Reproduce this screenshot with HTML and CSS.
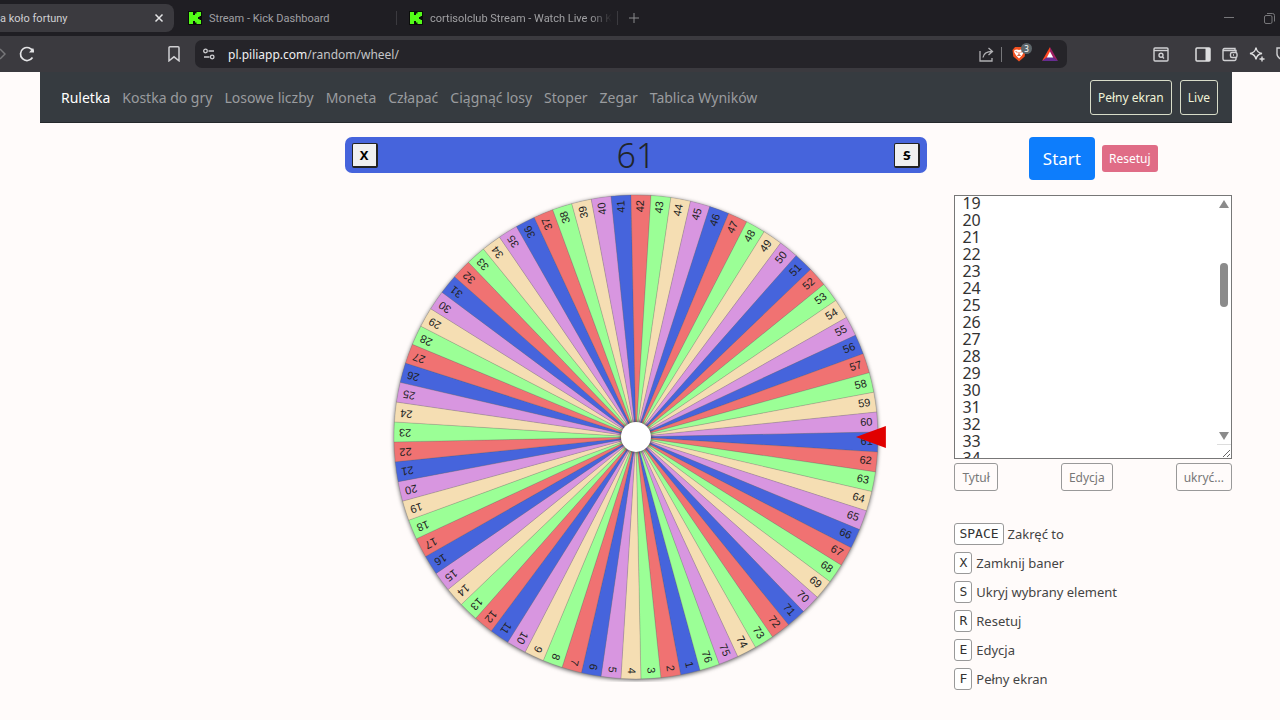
FILE: index.html
```
<!DOCTYPE html>
<html lang="pl">
  <head>
    <meta charset="utf-8" />
    <title>Ruletka - zakręć koło fortuny</title>
    <link rel="stylesheet" href="styles.css">
  </head>
  <body>
    <div class="browser">
      <div class="tabs">
        <div class="tab active">
          <span class="tab-title">a koło fortuny</span>
          <button class="icon-btn" aria-label="Zamknij kartę">
            <svg width="10" height="10" viewBox="0 0 10 10"><path d="M1.5 1.5l7 7M8.5 1.5l-7 7" stroke="#e4e4e6" stroke-width="1.5" /></svg>
          </button>
        </div>
        <div class="tab">
          <svg class="kick" width="14" height="14" viewBox="0 0 14 14"><rect width="14" height="14" fill="#0a0d0a" /><path d="M1 1h4v3h2V2.500h1.500V1H13v4h-1.500v1H10v2h1.500v1H13v4H8.500v-1.500H7V10H5v3H1z" fill="#53fc18" /></svg>
          <span class="tab-title">Stream - Kick Dashboard</span>
        </div>
        <div class="tab last">
          <svg class="kick" width="14" height="14" viewBox="0 0 14 14"><rect width="14" height="14" fill="#0a0d0a" /><path d="M1 1h4v3h2V2.500h1.500V1H13v4h-1.500v1H10v2h1.500v1H13v4H8.500v-1.500H7V10H5v3H1z" fill="#53fc18" /></svg>
          <span class="tab-title fade">cortisolclub Stream - Watch Live on K</span>
        </div>
        <button class="icon-btn new-tab" aria-label="Nowa karta">
          <svg width="10" height="10" viewBox="0 0 10 10"><path d="M5 0v10M0 5h10" stroke="#8b8b8e" /></svg>
        </button>
        <div class="window-buttons">
          <svg width="10" height="10" viewBox="0 0 10 10"><path d="M0 4.500h10" stroke="#77777a" /></svg>
          <svg width="11" height="11" viewBox="0 0 11 11" fill="none" stroke="#77777a"><rect x=".5" y="2.500" width="7.500" height="8" rx="1.500" /><path d="M3 .5h5.500a2 2 0 0 1 2 2v6" /></svg>
        </div>
      </div>
      <div class="toolbar">
        <svg class="forward" width="6" height="14" viewBox="0 0 6 14"><path d="M0 2l5 5-5 5" stroke="#77777a" stroke-width="1.500" fill="none" /></svg>
        <svg class="reload" width="18" height="18" viewBox="0 0 18 18"><path d="M14.500 12.500a6.500 6.500 0 1 1 .5-6" stroke="#e4e4e6" stroke-width="1.700" fill="none" /><path d="M11 7.500h5q.5-2.500-1-4.500z" fill="#e4e4e6" /></svg>
        <svg class="bookmark" width="12" height="16" viewBox="0 0 12 16"><path d="M1 1.800a1 1 0 0 1 1-1h8a1 1 0 0 1 1 1v13l-5-4-5 4z" stroke="#d0d0d3" stroke-width="1.500" fill="none" /></svg>
        <div class="address">
          <svg width="12" height="12" viewBox="0 0 12 12" stroke="#d0d0d3" stroke-width="1.300" fill="none"><circle cx="2.500" cy="3" r="1.800" /><path d="M5.500 3h5.500M1 9h5.500" /><circle cx="9.200" cy="9" r="1.800" /></svg>
          <span class="url"><b>pl.piliapp.com</b>/random/wheel/</span>
          <svg class="share" width="15" height="15" viewBox="0 0 15 15" stroke="#b0b0b3" stroke-width="1.300" fill="none"><path d="M1 4v10h12v-3M4 10.500q1-6 9-6M9.500 1l4 3.500-4 3.500" /></svg>
          <span class="divider light"></span>
          <div class="brave">
            <svg width="14" height="16" viewBox="0 0 14 16"><path d="M3 1h8l2.500 3-.8 6.500L7 15.500l-5.700-5L.5 4z" fill="#f1501f" /><path d="M2.500 4l2.500-.5 2 .6 2-.6 2.500.5.4 2-2 3.500-2.900 3-2.900-3L2.100 6z" fill="#fff" /><path d="M3.500 5.500l2 .8M10.500 5.500l-2 .8M7 6v3M5.300 9.500L7 8.800l1.700.7" stroke="#f1501f" stroke-width=".9" /></svg>
            <span class="count">3</span>
          </div>
          <svg width="16" height="14" viewBox="0 0 16 14"><path d="M8 0L0 14l8-5z" fill="#ff4724" /><path d="M8 0l8 14-8-5z" fill="#9e1f63" /><path d="M0 14h16L8 8z" fill="#662d91" /><path d="M8 4.500l3.200 6H4.800z" fill="#fff" /></svg>
        </div>
        <div class="extensions">
          <svg width="16" height="15" viewBox="0 0 16 15" fill="none" stroke="#d0d0d3" stroke-width="1.400"><rect x="1" y="1" width="14" height="13" rx="1" /><path d="M1 3.500h14" /><circle cx="8" cy="8.300" r="2" /><path d="M9.500 10l1.500 1.500" /></svg>
          <span class="divider"></span>
          <svg width="16" height="15" viewBox="0 0 16 15"><rect x="1" y="1" width="14" height="13" rx="1" fill="none" stroke="#dedee0" stroke-width="1.500" /><path d="M10.500 1H15v13h-4.500z" fill="#dedee0" /></svg>
          <svg width="16" height="15" viewBox="0 0 16 15" fill="none" stroke="#d0d0d3" stroke-width="1.400"><path d="M14 5V3.500H1.500M13 3.500V1.500H2.500a1.500 1.500 0 0 0-1.500 1.500v9a1.500 1.500 0 0 0 1.500 1.500H12.500a1.500 1.500 0 0 0 1.500-1.500v-1" /><rect x="8.500" y="5.500" width="6.500" height="5" rx="1.500" /><path d="M11 8h1" /></svg>
          <svg width="16" height="16" viewBox="0 0 16 16" fill="none" stroke="#dedee0" stroke-width="1.400"><path d="M7 1.500Q7.800 6.700 13 7.500Q7.800 8.300 7 13.500Q6.200 8.300 1 7.500Q6.200 6.700 7 1.500z" /><path d="M13 10.500v5M10.500 13h5" /></svg>
          <svg width="12" height="14" viewBox="0 0 12 14"><path d="M1 1v6q0 3 5 6 5-3 5-6V1z" fill="none" stroke="#d0d0d3" stroke-width="1.400" /></svg>
        </div>
      </div>
    </div>

    <div class="container">
      <nav class="navbar">
        <a class="current" href="#">Ruletka</a>
        <a href="#">Kostka do gry</a>
        <a href="#">Losowe liczby</a>
        <a href="#">Moneta</a>
        <a href="#">Człapać</a>
        <a href="#">Ciągnąć losy</a>
        <a href="#">Stoper</a>
        <a href="#">Zegar</a>
        <a href="#">Tablica Wyników</a>
        <div class="nav-buttons">
          <button>Pełny ekran</button>
          <button>Live</button>
        </div>
      </nav>

      <div class="main">
        <div class="wheel-column">
          <div class="banner">
            <button>X</button>
            <span id="result">61</span>
            <button><s>S</s></button>
          </div>
          <svg class="wheel" viewBox="-291 -245 583 490">
            <circle class="rim" r="242" />
            <g id="slices"></g>
            <circle class="hub" r="15" />
            <path class="pointer" d="M220 0l30-11v22z" />
          </svg>
        </div>

        <div class="side">
          <div class="actions">
            <button class="start">Start</button>
            <button class="reset">Resetuj</button>
          </div>
          <div class="list">
            <textarea id="items" aria-label="Lista"></textarea>
            <div class="scrollbar">
              <svg width="10" height="8" viewBox="0 0 10 8"><path d="M5 0l5 8H0z" /></svg>
              <div class="track"><div class="thumb" id="thumb"></div></div>
              <svg width="10" height="8" viewBox="0 0 10 8"><path d="M5 8l5-8H0z" /></svg>
            </div>
          </div>
          <div class="tools">
            <button>Tytuł</button>
            <button>Edycja</button>
            <button>ukryć...</button>
          </div>
          <ul class="keys">
            <li><kbd>SPACE</kbd> Zakręć to</li>
            <li><kbd>X</kbd> Zamknij baner</li>
            <li><kbd>S</kbd> Ukryj wybrany element</li>
            <li><kbd>R</kbd> Resetuj</li>
            <li><kbd>E</kbd> Edycja</li>
            <li><kbd>F</kbd> Pełny ekran</li>
          </ul>
        </div>
      </div>
    </div>

    <script src="wheel.js"></script>
  </body>
</html>
```
FILE: styles.css
```
* {
  box-sizing: border-box;
}

body {
  font-family: "Noto Sans", "Open Sans", sans-serif;
  margin: 0;
  background-color: #fffbfa;
  color: #212529;
  overflow-x: hidden;
}

button {
  font-family: inherit;
  cursor: pointer;
}

svg {
  flex-shrink: 0;
}

/* browser window */
.tabs {
  display: flex;
  align-items: center;
  height: 36px;
  background-color: #1f1e23;
  color: #a0a0a3;
  font-family: Roboto, sans-serif;
  font-size: 11px;
}

.tab {
  display: flex;
  align-items: center;
  gap: 7px;
  width: 208px;
  height: 28px;
  padding: 0 14px;
  white-space: nowrap;
}

.tab.active {
  width: 174px;
  padding: 0 10px 0 0;
  justify-content: space-between;
  background-color: #3b3a3f;
  border-radius: 0 8px 8px 0;
  color: #d0d0d3;
}

.tab.last {
  width: 236px;
  padding-left: 27px;
  padding-right: 8px;
  position: relative;
}

.tab.last::before,
.tab.last::after {
  content: "";
  width: 1px;
  height: 14px;
  background-color: #3b3a3f;
  position: absolute;
  left: 14px;
}

.tab.last::after {
  left: auto;
  right: 0;
}

.fade {
  mask-image: linear-gradient(to right, #000 88%, transparent);
}

.icon-btn {
  display: flex;
  padding: 0;
  border: 0;
  background: none;
}

.new-tab {
  margin-left: 11px;
}

.window-buttons {
  display: flex;
  gap: 30px;
  margin-left: auto;
  padding-right: 5px;
}

.toolbar {
  display: flex;
  align-items: center;
  height: 36px;
  background-color: #3b3a3f;
  overflow: hidden;
}

.reload {
  margin-left: 12px;
}

.bookmark {
  margin: 0 15px 0 132px;
}

.address {
  display: flex;
  align-items: center;
  flex: 1;
  height: 28px;
  padding: 0 9px 0 8px;
  background-color: #252429;
  border-radius: 7px;
}

.url {
  margin-left: 13px;
  font-size: 12px;
  color: #c4c4c7;
}

.url b {
  font-weight: 400;
  color: #f0f0f2;
}

.share {
  margin-left: auto;
}

.divider {
  width: 1px;
  height: 15px;
  background-color: #1f1e23;
}

.divider.light {
  margin: 0 10px 0 7px;
  background-color: #77777a;
}

.brave {
  display: flex;
  position: relative;
  margin-right: 16px;
}

.count {
  position: absolute;
  top: -3px;
  left: 9px;
  width: 11px;
  height: 11px;
  border-radius: 50%;
  background-color: #5d666b;
  color: #fff;
  font-size: 8px;
  line-height: 11px;
  text-align: center;
}

.extensions {
  display: flex;
  align-items: center;
  gap: 11px;
  width: 213px;
  padding-left: 86px;
}

.extensions .divider {
  margin: 0 2px;
}

/* page */
.container {
  margin: 0 48px 0 40px;
}

.navbar {
  display: flex;
  align-items: center;
  gap: 12px;
  height: 51px;
  padding: 0 14px 0 21px;
  background-color: #363b40;
  border-bottom: 1px solid #25292c;
  font-size: 14px;
  white-space: nowrap;
}

.navbar a {
  color: #9a9c9f;
  text-decoration: none;
}

.navbar .current {
  color: #fff;
}

.nav-buttons {
  display: flex;
  gap: 8px;
  margin-left: auto;
}

.nav-buttons button {
  height: 35px;
  padding: 0 7px;
  border: 1px solid #d8dcc8;
  border-radius: 3px;
  background: none;
  color: #f0f3d8;
  font-size: 12px;
}

.main {
  display: grid;
  grid-template-columns: 10fr 21fr 10fr;
  column-gap: 27px;
  padding-top: 14px;
}

.wheel-column {
  grid-column: 2;
}

.banner {
  display: flex;
  align-items: center;
  justify-content: space-between;
  height: 36px;
  padding: 0 7px;
  border-radius: 7px;
  background-color: #4664dc;
  font-size: 34px;
  font-weight: 300;
}

.banner button {
  width: 26px;
  height: 25px;
  padding: 0;
  border: 1px solid #222;
  border-width: 1px 2px 2px 1px;
  border-radius: 2px;
  background-color: #f0f0f0;
  color: #000;
  font-size: 13px;
  font-weight: 700;
}

.wheel {
  display: block;
  width: 100%;
  margin-top: 19px;
}

.rim {
  fill: #999;
  filter: drop-shadow(0 1px 2px #555);
}

.slice {
  stroke: #555;
  stroke-opacity: 0.4;
  stroke-width: 0.5;
}

.label {
  fill: #222;
  font-family: "Liberation Sans", sans-serif;
  font-size: 11px;
  text-anchor: end;
}

.hub {
  fill: #fff;
  filter: drop-shadow(0 0 2px #333);
}

.pointer {
  fill: #e00000;
}

.actions {
  display: flex;
  align-items: center;
  justify-content: center;
  gap: 7px;
  margin-bottom: 15px;
}

.actions button {
  border: 0;
  border-radius: 4px;
  color: #fff;
}

.actions .start {
  height: 43px;
  padding: 0 14px;
  background-color: #0d7dfc;
  font-size: 17px;
}

.actions .reset {
  height: 27px;
  padding: 0 7px;
  border-radius: 3px;
  background-color: #e06c86;
  font-size: 12px;
}

.list {
  position: relative;
}

textarea {
  display: block;
  width: 100%;
  height: 264px;
  padding: 2px 7px;
  border: 1px solid #777;
  background-color: #fff;
  color: #333;
  font-family: inherit;
  font-size: 16px;
  line-height: 17px;
  resize: vertical;
  scrollbar-width: none;
}

/* drawn over the right edge of the list */
.scrollbar {
  display: flex;
  flex-direction: column;
  align-items: center;
  gap: 3px;
  width: 14px;
  padding: 4px 0;
  border-bottom: 1px solid #ddd;
  position: absolute;
  top: 1px;
  right: 1px;
  bottom: 14px;
  fill: #8b8b8b;
  pointer-events: none;
}

.track {
  flex: 1;
  width: 8px;
}

.thumb {
  border-radius: 4px;
  background-color: #8b8b8b;
}

.tools {
  display: flex;
  justify-content: space-between;
  margin-top: 4px;
}

.tools button {
  height: 28px;
  padding: 0 7px;
  border: 1px solid #999;
  border-radius: 3px;
  background: none;
  color: #777;
  font-size: 12px;
}

.keys {
  display: grid;
  gap: 7px;
  margin: 32px 0 0;
  padding: 0;
  list-style: none;
  color: #444;
  font-size: 13px;
}

.keys li {
  display: flex;
  align-items: center;
  gap: 4px;
  height: 22px;
}

kbd {
  height: 22px;
  padding: 0 4px;
  border: 1px solid #999;
  border-radius: 3px;
  background-color: #fff;
  color: #333;
  font-family: "DejaVu Sans Mono", monospace;
  font-size: 13px;
  line-height: 20px;
}
```
FILE: wheel.js
```
var count = 76;
var radius = 242;
var step = 360 / count;
var colors = ["#4664dc", "#f07272", "#9bff96", "#f5deb3", "#d896e0"];
var svgNS = "http://www.w3.org/2000/svg";
var slices = document.getElementById("slices");

function point(deg) {
  var rad = (deg * Math.PI) / 180;
  return radius * Math.cos(rad) + " " + radius * Math.sin(rad);
}

var lines = [];
for (var n = 1; n <= count; n++) {
  // the wheel has stopped on 61
  var angle = (n - 61) * step + 1.2;
  // the last slice must not repeat the colour of the first one
  var color = n === count ? colors[2] : colors[(n - 1) % 5];

  var slice = document.createElementNS(svgNS, "path");
  slice.setAttribute("class", "slice");
  slice.setAttribute("fill", color);
  slice.setAttribute(
    "d",
    "M0 0L" + point(angle - step / 2) + "A242 242 0 0 1 " + point(angle + step / 2) + "z"
  );
  slices.appendChild(slice);

  var label = document.createElementNS(svgNS, "text");
  label.setAttribute("class", "label");
  label.setAttribute("x", 237);
  label.setAttribute("y", 3);
  label.setAttribute("transform", "rotate(" + angle + ")");
  label.textContent = n;
  slices.appendChild(label);

  lines.push(n);
}

var items = document.getElementById("items");
var thumb = document.getElementById("thumb");

function moveThumb() {
  var track = thumb.parentNode.clientHeight;
  thumb.style.height = (track * items.clientHeight) / items.scrollHeight + "px";
  thumb.style.marginTop = (track * items.scrollTop) / items.scrollHeight + "px";
}

items.value = lines.join("\n");
items.scrollTop = 18 * 17 + 3;
items.addEventListener("scroll", moveThumb);
moveThumb();
```
